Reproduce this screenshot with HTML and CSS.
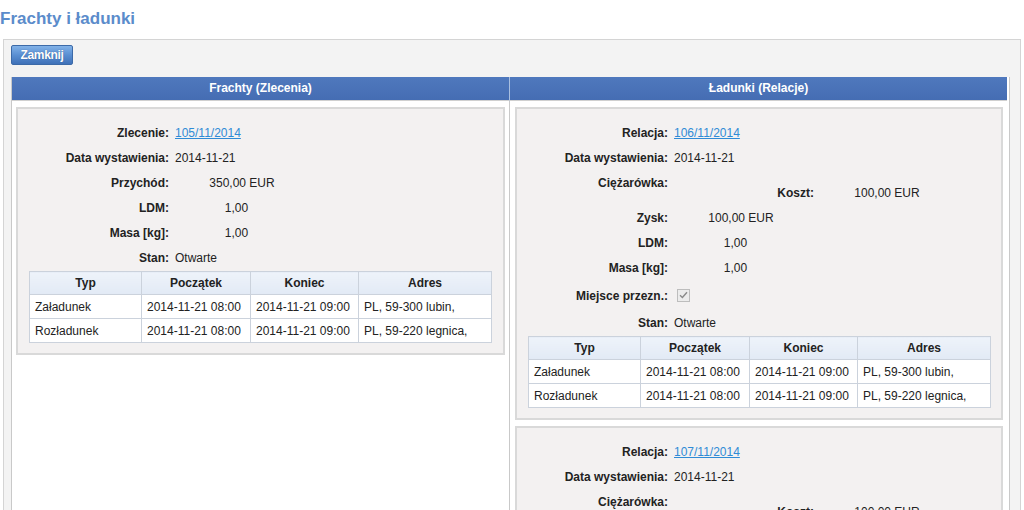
FILE: index.html
```html
<!DOCTYPE html>
<html lang="pl">
<head>
<meta charset="utf-8">
<title>Frachty i ładunki</title>
<link rel="stylesheet" href="styles.css">
</head>
<body>
<h1 class="title">Frachty i ładunki</h1>
<div class="panel">
  <button class="btn" type="button">Zamknij</button>
  <div class="cols">
    <div class="colhead">Frachty (Zlecenia)</div>
    <div class="colhead colhead-r">Ładunki (Relacje)</div>
    <div class="col">
      <div class="box">
        <div class="details">
          <div class="lbl">Zlecenie:</div><div class="val"><a href="#">105/11/2014</a></div>
          <div class="lbl">Data wystawienia:</div><div class="val">2014-11-21</div>
          <div class="lbl">Przychód:</div><div class="val"><span class="num">350,00 EUR</span></div>
          <div class="lbl">LDM:</div><div class="val"><span class="num num-s">1,00</span></div>
          <div class="lbl">Masa [kg]:</div><div class="val"><span class="num num-s">1,00</span></div>
          <div class="lbl">Stan:</div><div class="val">Otwarte</div>
        </div>
        <table class="stops">
          <colgroup><col class="c1"><col class="c2"><col class="c3"><col></colgroup>
          <thead><tr><th>Typ</th><th>Początek</th><th>Koniec</th><th>Adres</th></tr></thead>
          <tbody>
            <tr><td>Załadunek</td><td>2014-11-21 08:00</td><td>2014-11-21 09:00</td><td>PL, 59-300 lubin,</td></tr>
            <tr><td>Rozładunek</td><td>2014-11-21 08:00</td><td>2014-11-21 09:00</td><td>PL, 59-220 legnica,</td></tr>
          </tbody>
        </table>
      </div>
    </div>
    <div class="col col-r">
      <div class="box">
        <div class="details">
          <div class="lbl">Relacja:</div><div class="val"><a href="#">106/11/2014</a></div>
          <div class="lbl">Data wystawienia:</div><div class="val">2014-11-21</div>
          <div class="lbl lbl-top">Ciężarówka:</div>
          <div class="val val-sub"><span class="sublbl">Koszt:</span><span class="num">100,00 EUR</span></div>
          <div class="lbl">Zysk:</div><div class="val"><span class="num">100,00 EUR</span></div>
          <div class="lbl">LDM:</div><div class="val"><span class="num num-s">1,00</span></div>
          <div class="lbl">Masa [kg]:</div><div class="val"><span class="num num-s">1,00</span></div>
          <div class="lbl lbl-tall">Miejsce przezn.:</div>
          <div class="val val-tall"><span class="chk"><svg width="9" height="8" viewBox="0 0 9 8"><path d="M1 4.2 L3.4 6.5 L8 1.2" fill="none" stroke="#8a8a8a" stroke-width="1.4"/></svg></span></div>
          <div class="lbl">Stan:</div><div class="val">Otwarte</div>
        </div>
        <table class="stops">
          <colgroup><col class="c1"><col class="c2"><col class="c3"><col></colgroup>
          <thead><tr><th>Typ</th><th>Początek</th><th>Koniec</th><th>Adres</th></tr></thead>
          <tbody>
            <tr><td>Załadunek</td><td>2014-11-21 08:00</td><td>2014-11-21 09:00</td><td>PL, 59-300 lubin,</td></tr>
            <tr><td>Rozładunek</td><td>2014-11-21 08:00</td><td>2014-11-21 09:00</td><td>PL, 59-220 legnica,</td></tr>
          </tbody>
        </table>
      </div>
      <div class="box">
        <div class="details">
          <div class="lbl">Relacja:</div><div class="val"><a href="#">107/11/2014</a></div>
          <div class="lbl">Data wystawienia:</div><div class="val">2014-11-21</div>
          <div class="lbl lbl-top">Ciężarówka:</div>
          <div class="val val-sub"><span class="sublbl">Koszt:</span><span class="num">100,00 EUR</span></div>
          <div class="lbl">Zysk:</div><div class="val"><span class="num">100,00 EUR</span></div>
        </div>
      </div>
    </div>
  </div>
</div>
</body>
</html>
```
FILE: styles.css
```css
html, body {
  margin: 0;
  padding: 0;
  background: #ffffff;
  font-family: "Liberation Sans", Arial, sans-serif;
  font-size: 12px;
  color: #222222;
  overflow: hidden;
}

.title {
  margin: 0 0 9px 0;
  padding-top: 8px;
  font-size: 17px;
  line-height: 22px;
  font-weight: bold;
  color: #5b8ccb;
}

.panel {
  margin: 0 3px;
  border: 1px solid #d4d4d4;
  border-bottom: none;
  background: #f3f3f3;
  padding: 5px 11px 0 7px;
  height: 600px;
}

.btn {
  display: block;
  width: 62px;
  height: 20px;
  padding: 0;
  border: 1px solid #3c6aa8;
  border-radius: 2px;
  background: linear-gradient(#82b2e8, #5a8fd2 50%, #3f71b8);
  color: #ffffff;
  font-family: "Liberation Sans", Arial, sans-serif;
  font-size: 12px;
  font-weight: bold;
  text-shadow: 0 0 1px #2a4f86;
  letter-spacing: -0.3px;
}

.cols {
  margin-top: 12px;
  display: grid;
  grid-template-columns: 497px 498px;
  border-left: 1px solid #c9c9c9;
  border-right: 1px solid #c9c9c9;
  width: 997px;
  background: #ffffff;
}

.colhead {
  height: 23px;
  line-height: 23px;
  background: linear-gradient(#4f78bd, #456db3);
  color: #ffffff;
  font-weight: bold;
  text-align: center;
  border-bottom: 1px solid #d0d0d0;
}

.colhead-r {
  border-left: 1px solid #a9bfe0;
}

.col {
  padding: 6px 4px 0 4px;
  display: flex;
  flex-direction: column;
  gap: 6px;
}

.col-r {
  border-left: 1px solid #c9c9c9;
  padding-left: 5px;
  padding-right: 4px;
}

.box {
  border: 2px solid #d9d9d9;
  background: #f3f1f1;
  padding: 12px 11px 10px 10px;
}

.details {
  display: grid;
  grid-template-columns: 141px 1fr;
  column-gap: 6px;
  line-height: 25px;
}

.lbl {
  text-align: right;
  font-weight: bold;
  white-space: nowrap;
}

.lbl-top {
  height: 35px;
}

.lbl-tall,
.val-tall {
  line-height: 30px;
}

.val {
  white-space: nowrap;
}

.val a {
  color: #2f8bd6;
  text-decoration: underline;
}

.num {
  display: inline-block;
  width: 134px;
  text-align: center;
}

.num-s {
  box-sizing: border-box;
  padding-right: 11px;
}

.val-sub {
  display: flex;
  padding-top: 10px;
  column-gap: 6px;
}

.sublbl {
  width: 140px;
  text-align: right;
  font-weight: bold;
}

.chk {
  display: inline-block;
  vertical-align: middle;
  width: 11px;
  height: 11px;
  border: 1px solid #bdbdbd;
  background: #ececec;
  position: relative;
  top: -1px;
  margin-left: 3px;
}

.chk svg {
  display: block;
  margin: 1px 0 0 1px;
}

.stops {
  width: 463px;
  border-collapse: collapse;
  table-layout: fixed;
  background: #ffffff;
  margin-left: 1px;
}

.stops .c1 { width: 112px; }
.stops .c2 { width: 109px; }
.stops .c3 { width: 108px; }

.stops th,
.stops td {
  border: 1px solid #cbd2dc;
  padding: 0 5px;
  white-space: nowrap;
  overflow: hidden;
}

.stops th {
  height: 22px;
  background: linear-gradient(#eef3fa, #e2eaf5);
  font-weight: bold;
  font-size: 12px;
  text-align: center;
}

.stops td {
  height: 23px;
  text-align: left;
}
```
